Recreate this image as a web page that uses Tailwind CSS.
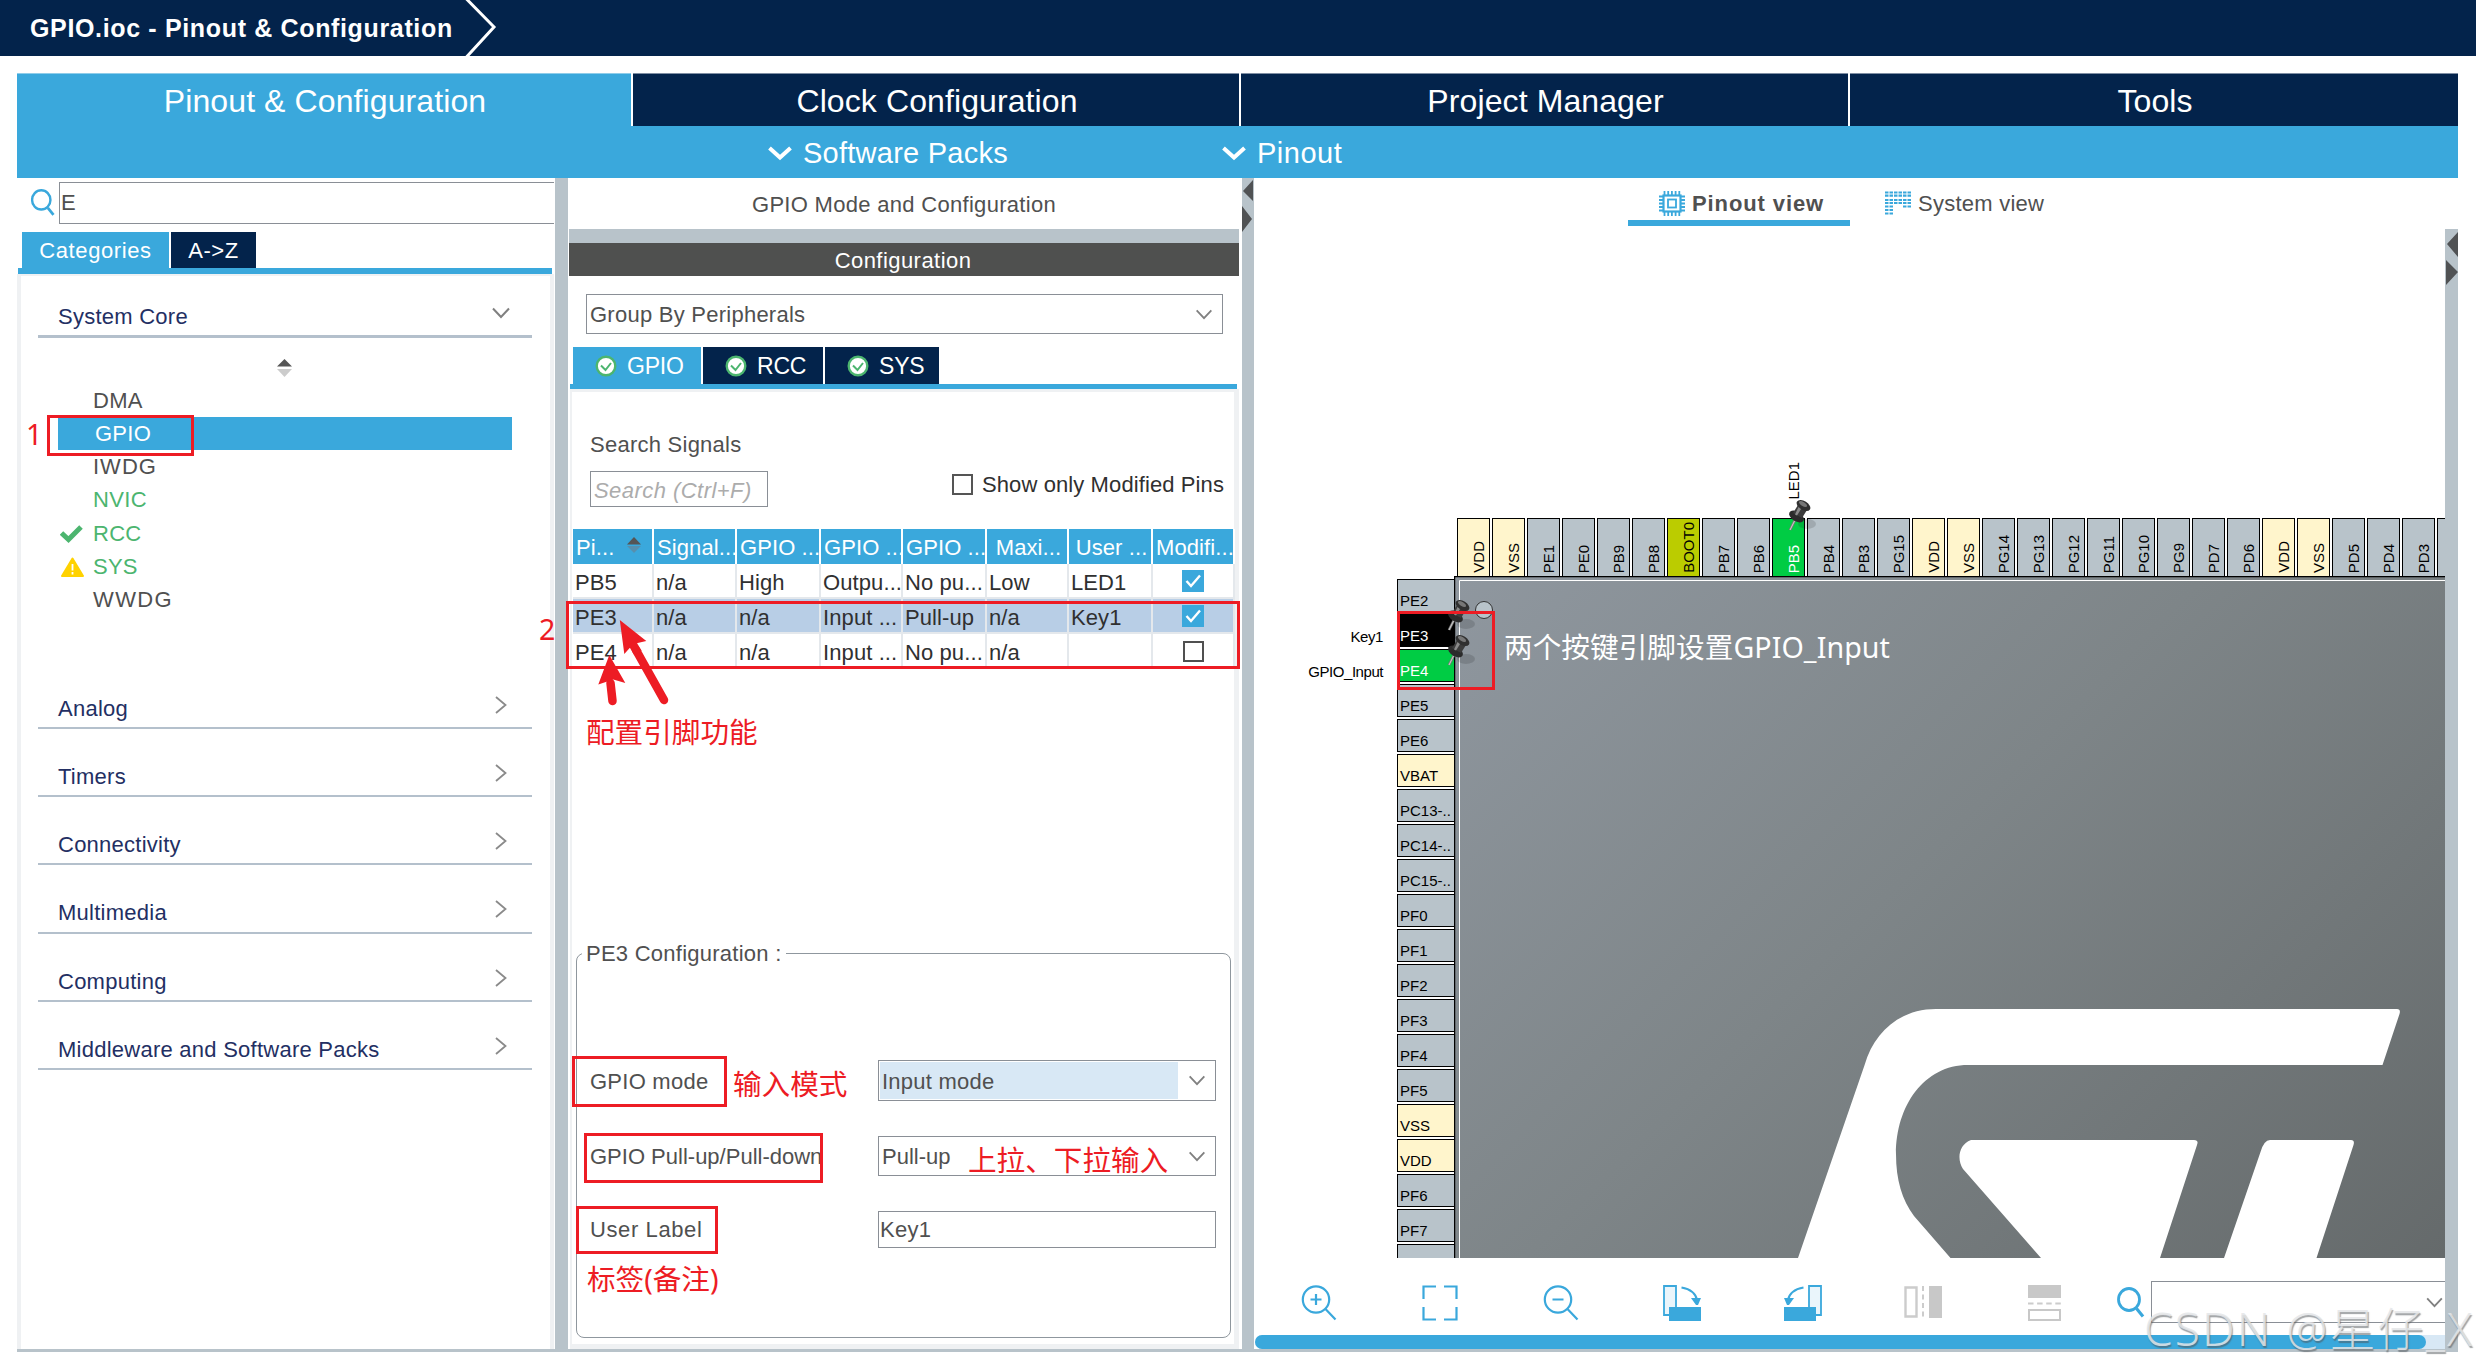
<!DOCTYPE html>
<html lang="zh-CN">
<head>
<meta charset="utf-8">
<title>GPIO.ioc - Pinout &amp; Configuration</title>
<script src="https://cdn.jsdelivr.net/npm/@tailwindcss/browser@4"></script>
</head>
<body class="relative flex h-[1370px] w-[2476px] flex-col overflow-hidden bg-white font-['Liberation_Sans',Arial,sans-serif] text-[22px] leading-[26px] tracking-[0.25px] text-[#505050]">

<!-- Shared symbols -->
<svg class="absolute size-0" aria-hidden="true">
  <defs>
    <symbol id="down" viewBox="0 0 18 12"><path d="M1 1.500 9 10l8-8.500" fill="none" stroke="#808080" stroke-width="2"/></symbol>
    <symbol id="right" viewBox="0 0 12 18"><path d="M1 1l9.500 8L1 17" fill="none" stroke="#8a8a8a" stroke-width="1.800"/></symbol>
    <symbol id="ok" viewBox="0 0 22 22"><circle cx="11" cy="11" r="9.300" fill="#fff" stroke="#4cb56f" stroke-width="2.400"/><path d="M6 10.500l4.500 4.500L16 8" fill="none" stroke="#4cb56f" stroke-width="2"/></symbol>
    <symbol id="tick" viewBox="0 0 22 22"><path d="M0 0h22v22H0z" fill="#3aa8dc"/><path d="M4.500 11l4.500 5L18 5.500" fill="none" stroke="#fff" stroke-width="2.400"/></symbol>
    <symbol id="search" viewBox="0 0 28 32"><ellipse cx="12" cy="12.500" rx="10.500" ry="11" fill="none" stroke="#3aa8dc" stroke-width="2.800"/><path d="M19.500 21.500l6.500 8" stroke="#3aa8dc" stroke-width="3.200"/></symbol>
    <symbol id="pin" viewBox="0 0 34 34">
      <ellipse cx="20" cy="25" rx="9" ry="5" fill="#000" opacity=".13"/>
      <path d="M8 21L3 31" stroke="#777" stroke-width="2.600"/><path d="M7.500 22L3 31" stroke="#ddd" stroke-width=".9"/>
      <ellipse cx="9.500" cy="17.500" rx="8.200" ry="4.800" transform="rotate(32 9.500 17.500)" fill="#2b2b2b"/>
      <path d="M11 6l9 5-5 8-9-5z" fill="#3c3c3c"/>
      <path d="M12 7l3 1.500-5 8-2-1z" fill="#8a8a8a"/>
      <ellipse cx="16.500" cy="6.500" rx="7.600" ry="4.500" transform="rotate(32 16.500 6.500)" fill="#303030"/>
      <ellipse cx="16" cy="5" rx="4.500" ry="2" transform="rotate(32 16 5)" fill="#777"/>
    </symbol>
  </defs>
</svg>

<!-- Breadcrumb bar -->
<header class="flex h-14 shrink-0 items-center bg-[#03234b] text-[25px] font-bold tracking-[0.65px] text-white">
  <span class="ml-[30px] w-[435px] whitespace-nowrap">GPIO.ioc - Pinout &amp; Configuration</span>
  <svg class="h-14 w-8" viewBox="0 0 32 56"><path d="M1.500 -1L29 27 1.500 57" fill="none" stroke="#fff" stroke-width="3"/></svg>
</header>

<main class="mt-[17px] ml-[17px] w-[2441px]">
  <!-- Main tabs -->
  <nav class="flex h-[53px] gap-[2px] text-[32px] tracking-[0.1px] text-white *:pt-[2px] *:pl-[2px]">
    <div class="flex w-[614px] items-center justify-center border-t border-[#8fcdea] bg-[#3aa8dc]">Pinout &amp; Configuration</div>
    <div class="flex w-[606px] items-center justify-center border-t border-[#7f8ea3] bg-[#03234b]">Clock Configuration</div>
    <div class="flex w-[607px] items-center justify-center border-t border-[#7f8ea3] bg-[#03234b]">Project Manager</div>
    <div class="flex flex-1 items-center justify-center border-t border-[#7f8ea3] bg-[#03234b]">Tools</div>
  </nav>
  <nav class="flex h-[52px] items-center bg-[#3aa8dc] pt-[2px] pl-[751px] text-[29px] tracking-[0.25px] text-white">
    <svg class="w-6 h-[15px]" viewBox="0 0 24 15"><path d="M1.500 2L12 11.500 22.500 2" fill="none" stroke="#fff" stroke-width="4"/></svg>
    <span class="ml-[11px] w-[419px]">Software Packs</span>
    <svg class="w-6 h-[15px]" viewBox="0 0 24 15"><path d="M1.500 2L12 11.500 22.500 2" fill="none" stroke="#fff" stroke-width="4"/></svg>
    <span class="ml-[11px] tracking-[0.5px]">Pinout</span>
  </nav>

  <div class="flex h-[1174px] border-b-3 border-[#b8c3ca]">
    <!-- Left: peripheral categories -->
    <section class="flex w-[538px] flex-col pt-1">
      <div class="flex h-[42px] items-center">
        <svg class="ml-[13px] h-7 w-[26px]" viewBox="0 0 28 32"><use href="#search"/></svg>
        <div class="ml-[3px] flex h-full w-[495px] items-center border-y border-l border-[#8a8f96] pl-[1px]">E</div>
      </div>
      <div class="mt-2 flex h-9 gap-[2px] pl-[5px] tracking-[0.6px] text-white *:pt-[2px]">
        <div class="flex w-[147px] items-center justify-center bg-[#3aa8dc]">Categories</div>
        <div class="flex w-[85px] items-center justify-center bg-[#03234b]">A-&gt;Z</div>
      </div>
      <div class="ml-[1px] h-[6px] w-[534px] bg-[#3aa8dc]"></div>
      <div class="w-[537px] flex-1 border-x-4 border-t-2 border-[#eff1f3] pl-[17px] text-[#232f63]">
        <div class="mt-[19px] flex h-[43px] w-[494px] items-center justify-between border-b-3 border-[#b4c0cc] pt-[3px] pr-[22px] pl-5">System Core<svg class="mb-2 h-3 w-[18px]"><use href="#down"/></svg></div>
        <svg class="mt-[21px] ml-[239px] h-[18px] w-[15px]" viewBox="0 0 15 18"><path d="M7.500 0L15 7.500H0z" fill="#555"/><path d="M0 10h15L7.500 18z" fill="#ccc"/></svg>
        <ul class="mt-[6.500px] ml-5 w-[454px] text-[#505050] *:flex *:h-[33.2px] *:items-center *:pt-[1.5px]">
          <li class="pl-[35px]">DMA</li>
          <li class="bg-[#3aa8dc] pl-[37px] text-white">GPIO</li>
          <li class="pl-[35px] tracking-[1px]">IWDG</li>
          <li class="pl-[35px] tracking-[0.4px] text-[#4cb56f]">NVIC</li>
          <li class="text-[#4cb56f]"><svg class="mr-[10px] ml-0.5 h-[18px] w-[23px]" viewBox="0 0 23 18"><path d="M1.500 8l7 6.500L21 2" fill="none" stroke="#4cb56f" stroke-width="5"/></svg>RCC</li>
          <li class="text-[#4cb56f]"><svg class="mr-[9px] ml-[3px] h-5 w-[23px]" viewBox="0 0 23 20"><path d="M11.500 1.500L22 19H1z" fill="#ffd200" stroke="#ffd200" stroke-width="2" stroke-linejoin="round"/><path d="M11.500 7v6.500M11.500 15v2.500" stroke="#fff" stroke-width="1.800"/></svg>SYS</li>
          <li class="pl-[35px] tracking-[1.4px]">WWDG</li>
        </ul>
        <div class="mt-[45px] w-[494px] *:flex *:h-[68.2px] *:items-center *:justify-between *:border-b-2 *:border-[#b4c0cc] *:pt-[30px] *:pr-[25px] *:pl-5">
          <div>Analog<svg class="mb-[8px] h-[18px] w-3"><use href="#right"/></svg></div>
          <div>Timers<svg class="mb-[8px] h-[18px] w-3"><use href="#right"/></svg></div>
          <div>Connectivity<svg class="mb-[8px] h-[18px] w-3"><use href="#right"/></svg></div>
          <div>Multimedia<svg class="mb-[8px] h-[18px] w-3"><use href="#right"/></svg></div>
          <div>Computing<svg class="mb-[8px] h-[18px] w-3"><use href="#right"/></svg></div>
          <div>Middleware and Software Packs<svg class="mb-[8px] h-[18px] w-3"><use href="#right"/></svg></div>
        </div>
      </div>
    </section>
    <div class="w-[13px] bg-[#b8c3ca]"></div>

    <!-- Middle: GPIO configuration -->
    <section class="flex w-[674px] flex-col pr-[3px] pl-[1px]">
      <div class="flex h-[51px] items-center justify-center pt-[2px] tracking-[0.3px]">GPIO Mode and Configuration</div>
      <div class="h-[14px] bg-[#b8c3ca]"></div>
      <div class="flex h-[33px] items-center justify-center bg-[#4f504f] pt-0.5 pr-[2px] tracking-[0.45px] text-white">Configuration</div>
      <div class="mt-[18px] ml-[17px] flex h-10 w-[637px] items-center justify-between border border-[#8a8f96] pt-[1px] pr-[9px] pl-[3px]">Group By Peripherals<svg class="h-[11px] w-[18px]"><use href="#down"/></svg></div>
      <div class="mt-[13px] ml-1 flex h-[37px] gap-[2px] text-[23px] tracking-[-0.2px] text-white *:flex *:items-center *:gap-[10px] *:pt-[1px] *:pl-[22px]">
        <div class="w-[128px] bg-[#3aa8dc]"><svg class="size-[22px]"><use href="#ok"/></svg>GPIO</div>
        <div class="w-[120px] bg-[#03234b]"><svg class="size-[22px]"><use href="#ok"/></svg>RCC</div>
        <div class="w-[114px] bg-[#03234b]"><svg class="size-[22px]"><use href="#ok"/></svg>SYS</div>
      </div>
      <div class="ml-[1px] h-[5px] w-[667px] bg-[#3aa8dc]"></div>
      <div class="ml-[1px] flex-1 border-t-3 border-r-5 border-b-5 border-l-2 border-[#eff1f3]">
        <div class="mt-[37px] ml-[18px] h-[30px] leading-[32px]">Search Signals</div>
        <div class="mt-3 ml-[18px] flex h-9 items-center">
          <div class="flex h-full w-[178px] items-center border border-[#8a8f96] pt-[3px] pl-[3px] tracking-[0.45px] text-[#acacac] italic">Search (Ctrl+F)</div>
          <div class="mb-[10px] ml-[184px] size-[21px] border-2 border-[#555]"></div>
          <span class="mb-[9px] ml-[9px] tracking-[0.1px] text-[#303030]">Show only Modified Pins</span>
        </div>
        <div class="mt-[22px] w-[662px] pl-[1px] whitespace-nowrap text-[#303030] tracking-[0.1px]">
          <div class="grid h-[35px] grid-cols-[81px_83px_84px_82px_84px_82px_84px_82px] text-white *:flex *:items-center *:border-r-2 *:border-white *:bg-[#3aa8dc] *:pt-[2px] *:pl-[3px]">
            <div>Pi...<svg class="mb-1.5 ml-[13px] h-4 w-[14px]" viewBox="0 0 14 16"><path d="M7 0l7 7.500H0z" fill="#555"/><path d="M0 9h14L7 16z" fill="#578fad"/></svg></div>
            <div>Signal...</div><div>GPIO ...</div><div>GPIO ...</div><div>GPIO ...</div><div class="justify-center">Maxi...</div><div class="justify-center">User ...</div><div>Modifi...</div>
          </div>
          <div class="grid h-[35px] grid-cols-[81px_83px_84px_82px_84px_82px_84px_82px] *:flex *:items-center *:border-r-2 *:border-b-2 *:border-[#e4e8ec] *:pt-[4px] *:pl-[2px]">
            <div>PB5</div><div>n/a</div><div>High</div><div>Outpu...</div><div>No pu...</div><div>Low</div><div>LED1</div><div class="justify-center"><svg class="mr-[2px] mb-1 size-[22px]"><use href="#tick"/></svg></div>
          </div>
          <div class="grid h-[35px] grid-cols-[81px_83px_84px_82px_84px_82px_84px_82px] *:flex *:items-center *:border-r-2 *:border-b-2 *:border-[#e4e8ec] *:bg-[#b8cee6] *:pt-[5px] *:pl-[2px]">
            <div>PE3</div><div>n/a</div><div>n/a</div><div>Input ...</div><div>Pull-up</div><div>n/a</div><div>Key1</div><div class="justify-center"><svg class="mr-[2px] mb-1 size-[22px]"><use href="#tick"/></svg></div>
          </div>
          <div class="grid h-[35px] grid-cols-[81px_83px_84px_82px_84px_82px_84px_82px] *:flex *:items-center *:border-r-2 *:border-b-2 *:border-[#e4e8ec] *:pt-[4px] *:pl-[2px]">
            <div>PE4</div><div>n/a</div><div>n/a</div><div>Input ...</div><div>No pu...</div><div>n/a</div><div></div><div class="justify-center"><i class="mr-[2px] mb-0.5 size-[21px] border-2 border-[#505050]"></i></div>
          </div>
        </div>
        <fieldset class="mt-[269px] ml-1 h-[400px] w-[655px] rounded-lg border-[1.500px] border-[#8f979e] pl-[13px]">
          <legend class="-ml-[8px] h-[30px] pr-1 pl-1 leading-[32px]">PE3 Configuration :</legend>
          <div class="mt-[92px] flex h-[41px] items-center">
            <span class="w-[288px] pt-[3px]">GPIO mode</span>
            <div class="flex h-full w-[338px] items-center border border-[#8a8f96] p-[1px]">
              <div class="flex h-full w-[298px] items-center bg-[#d8e8f5] pt-[2px] pl-[2px]">Input mode</div>
              <svg class="ml-2.5 h-[11px] w-[18px]"><use href="#down"/></svg>
            </div>
          </div>
          <div class="mt-[35px] flex h-10 items-center">
            <span class="w-[288px] pt-[2px] tracking-[0px] whitespace-nowrap">GPIO Pull-up/Pull-down</span>
            <div class="flex h-full w-[338px] items-center justify-between border border-[#8a8f96] pt-[2px] pr-[9px] pl-[3px] tracking-[0px]">Pull-up<svg class="mb-[2px] h-[11px] w-[18px]"><use href="#down"/></svg></div>
          </div>
          <div class="mt-[35px] flex h-[37px] items-center">
            <span class="w-[288px] pt-[1px] tracking-[0.6px]">User Label</span>
            <div class="flex h-full w-[338px] items-center border border-[#8a8f96] pt-[1px] pl-[1px]">Key1</div>
          </div>
        </fieldset>
      </div>
    </section>
    <div class="w-[12px] bg-[#b8c3ca]">
      <svg class="mt-[2px] h-[52px] w-3" viewBox="0 0 12 52"><path d="M11 0v21L1 11zM0 26l10 13L0 52z" fill="#505254"/></svg>
    </div>

    <!-- Right: chip pinout -->
    <section class="flex flex-1 flex-col">
      <div class="flex h-[51px]">
        <div class="ml-[374px] flex h-12 w-[222px] items-center border-b-6 border-[#3aa8dc] pt-[10px] pl-[31px] font-bold tracking-[0.89px] whitespace-nowrap">
          <svg class="mr-[7px] mb-[2px] h-[25px] w-[26px] shrink-0" viewBox="0 0 26 25" fill="none" stroke="#3aa8dc" stroke-width="1.800"><rect x="4.500" y="4.500" width="17" height="16" stroke-width="2.200"/><rect x="9" y="8.500" width="8" height="8"/><path d="M5.500 0v4M9.200 0v4M12.900 0v4M16.600 0v4M20.300 0v4M5.500 21v4M9.200 21v4M12.900 21v4M16.600 21v4M20.300 21v4M0 5.500h4M0 9h4M0 12.500h4M0 16h4M0 19.500h4M22 5.500h4M22 9h4M22 12.500h4M22 16h4M22 19.500h4"/></svg>Pinout view
        </div>
        <div class="ml-[35px] flex h-12 items-center pt-[4px]">
          <svg class="mr-[7px] mb-[2px] h-6 w-[26px]" viewBox="0 0 26 24" fill="none" stroke="#3aa8dc" stroke-width="2.200"><path d="M0 1.500h8M9 1.500h8M18 1.500h8M0 4.700h8M9 4.700h8M18 4.700h8M0 9h8M9 9h8M18 9h8M0 12h8M9 12h8M18 12h8M0 15.500h8M18 15.500h8M0 19h8M0 22.500h8" stroke-dasharray="3.500 1"/></svg>System view
        </div>
      </div>
      <div class="flex flex-1">
        <div class="flex w-[1191px] flex-col">
          <!-- Chip canvas: pins and package on a free drawing area -->
          <div class="relative h-[1029px] overflow-hidden text-[15px] leading-4 tracking-[0px] text-black">
            <svg class="absolute top-[347px] left-[200px] h-[682px] w-[991px]" viewBox="1454 576 991 682">
              <defs><linearGradient id="pkg" gradientUnits="userSpaceOnUse" x1="1454" y1="576" x2="2290" y2="1412"><stop offset="0" stop-color="#8f979f"/><stop offset=".45" stop-color="#7e8588"/><stop offset="1" stop-color="#656a6b"/></linearGradient></defs>
              <path d="M1454.500 1260V576.500H2450V1260z" fill="url(#pkg)" stroke="#000" stroke-width="1.500"/>
              <path d="M1459.500 1260V580.500H2450" fill="none" stroke="#fff"/>
              <circle cx="1484" cy="610" r="8.500" fill="#b8c3ca" stroke="#333"/>
              <g fill="#fff">
                <path d="M1798 1258L1864.600 1065C1874 1032 1900 1009 1936 1009H2397Q2401 1009 2399.500 1014L2382.500 1065H1968C1924 1065 1896 1106 1896 1154C1896 1180 1902 1200 1914 1216L1950.500 1258z"/>
                <path d="M1971 1140H2194Q2199 1140 2197 1145L2160 1258H2041L1963 1169C1957 1160 1958 1145 1971 1140z"/>
                <path d="M2270 1140H2351Q2355 1140 2353.500 1145L2316.500 1258H2224L2260.500 1152Q2264 1140 2270 1140z"/>
              </g>
            </svg>
            <div id="top-pins" class="absolute top-[289px] left-[203px] flex gap-[2px]"></div>
            <div id="left-pins" class="absolute top-[350px] left-[143px] flex flex-col gap-[2px]"></div>
            <span class="absolute top-[233px] left-[532px] rotate-180 [writing-mode:vertical-rl]">LED1</span>
            <span class="absolute top-[400px] right-[1062px] tracking-[-0.4px]">Key1</span>
            <span class="absolute top-[435px] right-[1062px] tracking-[-0.45px]">GPIO_Input</span>
            <svg class="absolute top-[270px] left-[533px] size-[34px]"><use href="#pin"/></svg>
            <svg class="absolute top-[370px] left-[192px] size-[34px]"><use href="#pin"/></svg>
            <svg class="absolute top-[405px] left-[192px] size-[34px]"><use href="#pin"/></svg>
          </div>
          <!-- View toolbar -->
          <div class="flex h-[77px] pl-[5px]">
            <div class="grid grid-cols-[repeat(7,120.8px)] items-start justify-items-center pt-[27px]">
              <svg class="h-9 w-[36px]" viewBox="0 0 36 36" fill="none" stroke="#3aa8dc" stroke-width="2.200"><circle cx="15" cy="14.500" r="13.200"/><path d="M15 9v11M9.500 14.500h11M24.500 24l10 10.500"/></svg>
              <svg class="h-9 w-[36px]" viewBox="0 0 36 36" fill="none" stroke="#3aa8dc" stroke-width="2.200"><path d="M1.500 14V1.500H14M22 1.500h12.500V14M1.500 22v12.500H14M22 34.500h12.500V22"/></svg>
              <svg class="h-9 w-[36px]" viewBox="0 0 36 36" fill="none" stroke="#3aa8dc" stroke-width="2.200"><circle cx="15" cy="14.500" r="13.200"/><path d="M9.500 14.500h11M24.500 24l10 10.500"/></svg>
              <svg class="h-9 w-[38px]" viewBox="0 0 38 36"><path d="M1 1h12v29H1z" fill="#eaf5fb" stroke="#3aa8dc" stroke-width="1.800"/><path d="M6 22h32v14H6z" fill="#3aa8dc"/><path d="M18.500 2.500Q32 5 34 15" fill="none" stroke="#3aa8dc" stroke-width="2.200"/><path d="M28 13h10l-3 7h-2z" fill="#3aa8dc"/></svg>
              <svg class="h-9 w-[38px]" viewBox="0 0 38 36"><path d="M25 1h12v29H25z" fill="#eaf5fb" stroke="#3aa8dc" stroke-width="1.800"/><path d="M0 22h32v14H0z" fill="#3aa8dc"/><path d="M19.500 2.500Q6 5 4 15" fill="none" stroke="#3aa8dc" stroke-width="2.200"/><path d="M0 13h10l-5 7H3z" fill="#3aa8dc"/></svg>
              <svg class="h-[34px] w-[38px]" viewBox="0 0 38 34"><path d="M1.500 2.500h11v29h-11z" fill="#fff" stroke="#ccc" stroke-width="2.400"/><path d="M25 1h13v32H25z" fill="#c8c8c8"/><path d="M19 1v32" stroke="#ccc" stroke-width="2" stroke-dasharray="5 3.500"/></svg>
              <svg class="h-9 w-[33px]" viewBox="0 0 33 36"><path d="M0 0h33v13H0z" fill="#c8c8c8"/><path d="M1 25h31v10H1z" fill="#fff" stroke="#c8c8c8" stroke-width="2"/><path d="M0 18.500h33" stroke="#ccc" stroke-width="2.200" stroke-dasharray="5.500 3.600"/></svg>
            </div>
            <svg class="mt-[29px] ml-[11px] h-8 w-[30px] shrink-0"><use href="#search"/></svg>
            <div class="mt-[23px] ml-[5px] flex h-[42px] flex-1 items-center justify-end border-y border-l border-[#8a8f96] pr-[2px]"><svg class="h-[11px] w-[17px]"><use href="#down"/></svg></div>
          </div>
          <div class="ml-[1px] h-[14px] rounded-l-lg bg-[#d8e8f5]"><div class="h-full w-[1171px] rounded-lg bg-[#3aa8dc]"></div></div>
        </div>
        <div class="w-[13px] bg-[#b8c3ca]">
          <svg class="mt-[3px] h-[54px] w-[13px]" viewBox="0 0 13 54"><path d="M13 0v25L2 12zM1 28l12 12L1 53z" fill="#505254"/></svg>
        </div>
      </div>
    </section>
  </div>
</main>

<!-- Annotations over the window -->
<div class="font-['Noto_Sans','Noto_Sans_CJK_SC',sans-serif] text-[28.6px] leading-8 tracking-[0px] whitespace-nowrap text-[#ed1c24]">
  <div class="absolute top-[415px] left-[47px] h-[41px] w-[147px] border-3"></div>
  <span class="absolute top-[418px] left-[26px]">1</span>
  <div class="absolute top-[601px] left-[566px] h-[68px] w-[674px] border-3"></div>
  <span class="absolute top-[613px] left-[539px]">2</span>
  <svg class="absolute top-[615px] left-[590px] h-[95px] w-[85px]" viewBox="590 615 85 95" fill="#ed1c24" stroke="#ed1c24"><path d="M610.500 683L612.500 701" stroke-width="8.500" stroke-linecap="round"/><path d="M609.300 655l16 28-12-3.500-15 5z" stroke="none"/><path d="M636 650l28 50" stroke-width="8.500" stroke-linecap="round"/><path d="M619.800 620l26.500 21-13 3-9 10z" stroke="none"/><path d="M632 643l6 10" stroke-width="8.500"/></svg>
  <span class="absolute top-[716px] left-[586px]">配置引脚功能</span>
  <div class="absolute top-[1056px] left-[572px] h-[51px] w-[155px] border-3"></div>
  <span class="absolute top-[1068px] left-[733px]">输入模式</span>
  <div class="absolute top-[1133px] left-[584px] h-[50px] w-[239px] border-3"></div>
  <span class="absolute top-[1144px] left-[968px]">上拉、下拉输入</span>
  <div class="absolute top-[1206px] left-[576px] h-[48px] w-[142px] border-3"></div>
  <span class="absolute top-[1263px] left-[587px]">标签(备注)</span>
  <div class="absolute top-[611px] left-[1397px] h-[79px] w-[98px] border-3"></div>
  <span class="absolute top-[631px] left-[1504px] tracking-[0.08px] text-white">两个按键引脚设置GPIO_Input</span>
</div>
<div class="absolute top-[1298px] left-[2144px] font-['Noto_Sans','Noto_Sans_CJK_SC',sans-serif] text-[46px] leading-[60px] font-light tracking-[2.1px] whitespace-nowrap text-[#e4e6e8]/85 [text-shadow:1px_2px_1px_rgb(80_85_90/0.55)]">CSDN @星仔_X</div>

<script>
  // Pin fill follows the pin's role: power, boot, assigned or free.
  const fill = name => /^V/.test(name) ? 'bg-[#fff5cc]'
    : name === 'BOOT0' ? 'bg-[#bbcc00]'
    : name === 'PE3' ? 'bg-black text-white'
    : name === 'PB5' || name === 'PE4' ? 'bg-[#00cc44] text-white'
    : 'bg-[#b8c3ca]';
  const topPins = 'VDD VSS PE1 PE0 PB9 PB8 BOOT0 PB7 PB6 PB5 PB4 PB3 PG15 VDD VSS PG14 PG13 PG12 PG11 PG10 PG9 PD7 PD6 VDD VSS PD5 PD4 PD3'.split(' ').concat('');
  const leftPins = 'PE2 PE3 PE4 PE5 PE6 VBAT PC13-.. PC14-.. PC15-.. PF0 PF1 PF2 PF3 PF4 PF5 VSS VDD PF6 PF7'.split(' ').concat('');
  document.getElementById('top-pins').innerHTML = topPins.map(n =>
    `<div class="flex h-[59px] w-[33px] shrink-0 items-end border border-black pb-[3px] pl-[13px] ${fill(n)}"><span class="w-4 rotate-180 [writing-mode:vertical-rl]">${n}</span></div>`).join('');
  document.getElementById('left-pins').innerHTML = leftPins.map(n =>
    `<div class="flex h-[33px] w-[58px] shrink-0 items-center border border-black pt-[11px] pl-[2px] ${fill(n)}">${n}</div>`).join('');
</script>
</body>
</html>
